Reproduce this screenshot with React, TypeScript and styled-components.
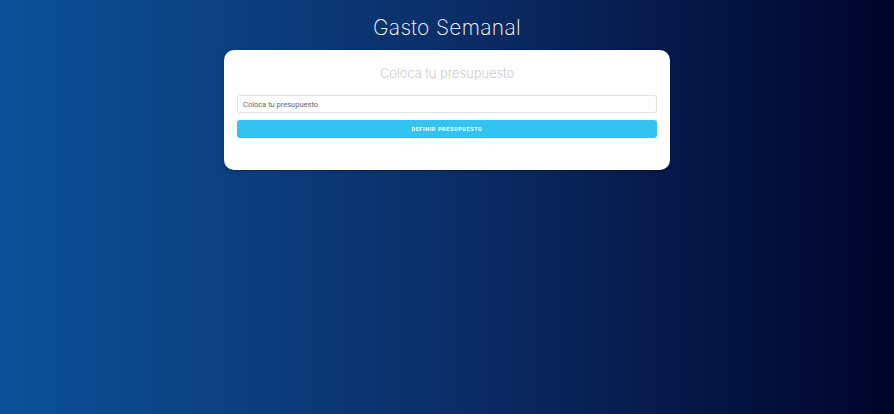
import React from "react";
import styled, { createGlobalStyle } from "styled-components";

const GlobalStyle = createGlobalStyle`
  html, body { margin: 0; padding: 0; height: 100%; }
  body {
    font-family: "Roboto", "Liberation Sans", sans-serif;
    background: linear-gradient(to right, #0b5299 0%, #0b2e68 50%, #00042b 100%);
    min-height: 414px;
  }
  #root { min-height: 414px; }
`;

const Page = styled.div`
  display: flex;
  flex-direction: column;
  align-items: center;
  padding-top: 12px;
`;

const Title = styled.h1`
  margin: 0;
  font-family: "Inter", "Roboto", sans-serif;
  font-weight: 200;
  font-size: 21px;
  line-height: 32px;
  color: #ffffff;
  letter-spacing: 0.3px;
`;

const Card = styled.div`
  margin-top: 6px;
  width: 446px;
  height: 120px;
  box-sizing: border-box;
  background: #ffffff;
  border-radius: 10px;
  padding: 12px 13px 0 13px;
  display: flex;
  flex-direction: column;
  box-shadow: 0 1px 3px rgba(0, 0, 0, 0.3);
`;

const CardHeading = styled.h2`
  margin: 0;
  text-align: center;
  font-family: "Inter", "Roboto", sans-serif;
  font-weight: 200;
  font-size: 13px;
  line-height: 22px;
  color: #b4b4b4;
`;

const Form = styled.form`
  margin-top: 11px;
  display: flex;
  flex-direction: column;
  gap: 7px;
`;

const Input = styled.input`
  box-sizing: border-box;
  height: 18px;
  width: 100%;
  border: 1px solid #e1e1e1;
  border-radius: 3px;
  padding: 0 5px;
  font-family: "Roboto", sans-serif;
  font-size: 7.5px;
  color: #333;
  background: #fff;
  outline: none;
  &::placeholder { color: #666; }
`;

const Button = styled.button`
  box-sizing: border-box;
  height: 18px;
  width: 100%;
  border: none;
  border-radius: 3px;
  background: #33c3f0;
  color: #ffffff;
  font-family: "Roboto", sans-serif;
  font-weight: 700;
  font-size: 5.5px;
  letter-spacing: 0.6px;
  text-transform: uppercase;
  cursor: pointer;
`;

export default function App() {
  return (
    <>
      <GlobalStyle />
      <Page>
        <Title>Gasto Semanal</Title>
        <Card>
          <CardHeading>Coloca tu presupuesto</CardHeading>
          <Form onSubmit={(e) => e.preventDefault()}>
            <Input type="number" placeholder="Coloca tu presupuesto" />
            <Button type="submit">Definir presupuesto</Button>
          </Form>
        </Card>
      </Page>
    </>
  );
}
